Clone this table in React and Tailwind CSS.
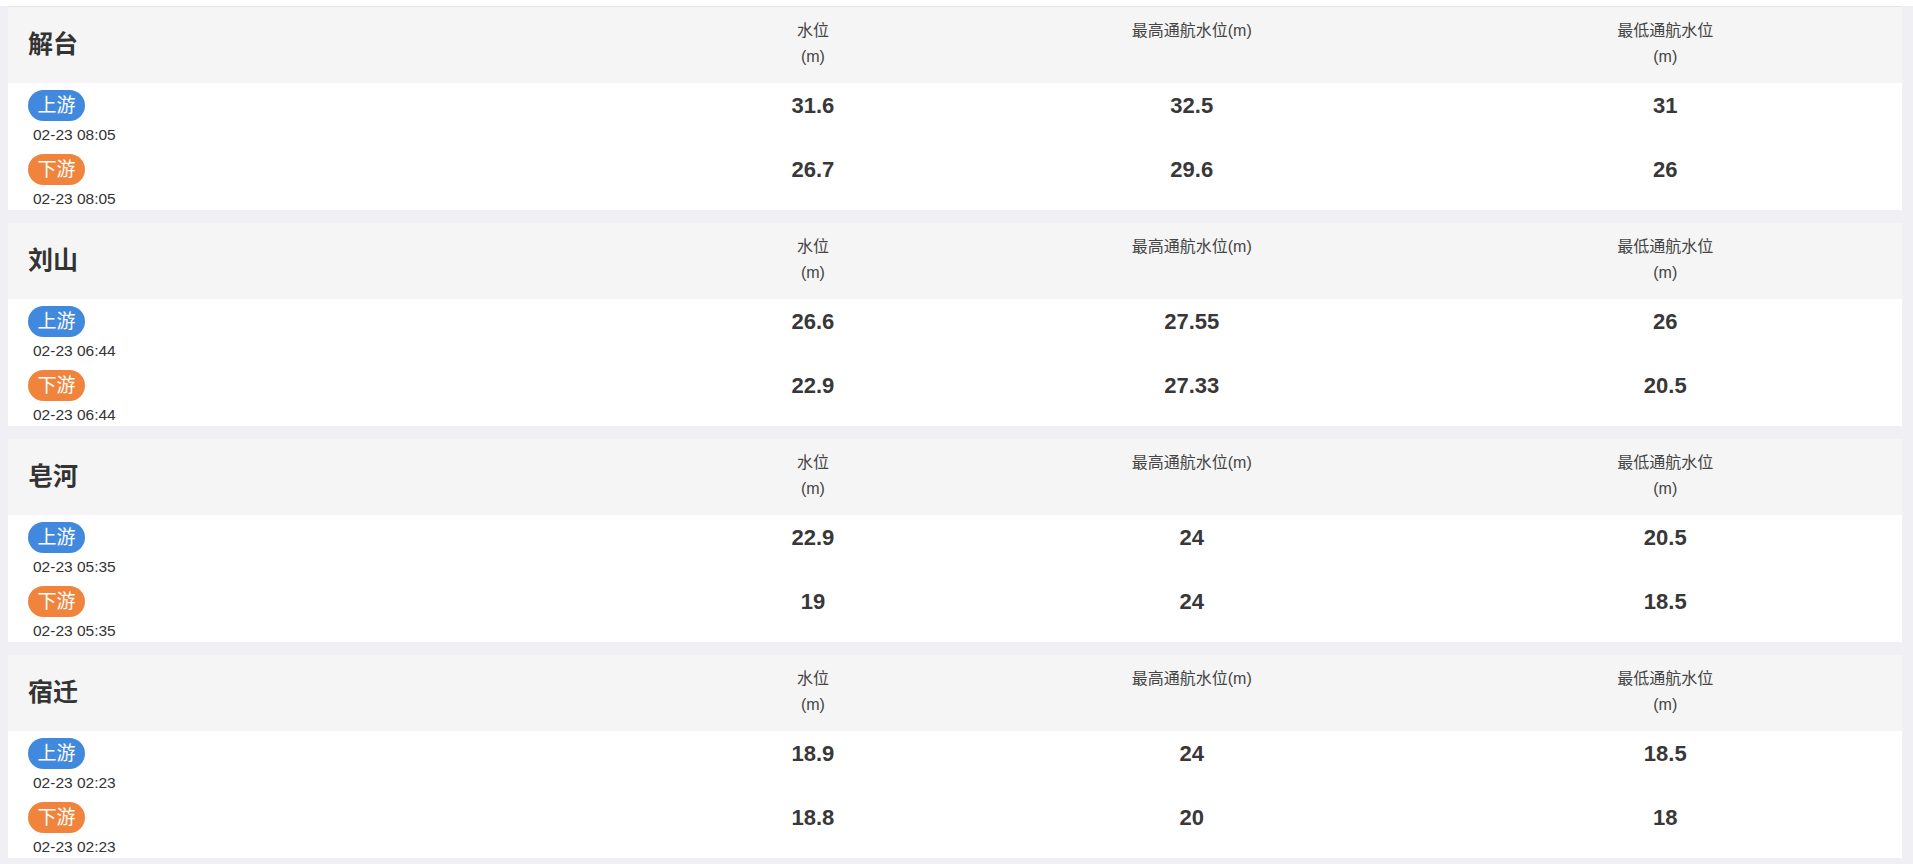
import React from "react";

const stations = [
  {
    name: "解台",
    rows: [
      { type: "up", time: "02-23 08:05", level: "31.6", max: "32.5", min: "31" },
      { type: "down", time: "02-23 08:05", level: "26.7", max: "29.6", min: "26" },
    ],
  },
  {
    name: "刘山",
    rows: [
      { type: "up", time: "02-23 06:44", level: "26.6", max: "27.55", min: "26" },
      { type: "down", time: "02-23 06:44", level: "22.9", max: "27.33", min: "20.5" },
    ],
  },
  {
    name: "皂河",
    rows: [
      { type: "up", time: "02-23 05:35", level: "22.9", max: "24", min: "20.5" },
      { type: "down", time: "02-23 05:35", level: "19", max: "24", min: "18.5" },
    ],
  },
  {
    name: "宿迁",
    rows: [
      { type: "up", time: "02-23 02:23", level: "18.9", max: "24", min: "18.5" },
      { type: "down", time: "02-23 02:23", level: "18.8", max: "20", min: "18" },
    ],
  },
];

const Badge = ({ type }) => (
  <div
    className={`flex h-[31px] w-[57px] items-center justify-center rounded-full text-[19px] leading-none text-white ${
      type === "up" ? "bg-[#4189dd]" : "bg-[#f0843c]"
    }`}
  >
    {type === "up" ? "上游" : "下游"}
  </div>
);

const Value = ({ children }) => (
  <div className="flex h-[31px] items-center justify-center text-[22px] font-bold text-[#383838]">
    {children}
  </div>
);

const StationCard = ({ station, first }) => (
  <div className={`bg-white ${first ? "mt-[6px] border-t border-[#e4e4e8]" : "mt-[13px]"}`}>
    {/* header */}
    <div className="grid h-[76px] grid-cols-[35%_15%_25%_25%] bg-[#f5f5f5] text-[#444]">
      <div className="flex items-center pl-[20px] text-[25px] font-bold text-[#333]">
        {station.name}
      </div>
      <div className="pt-[11px] text-center text-[16px] leading-[26px]">
        水位
        <br />
        (m)
      </div>
      <div className="pt-[11px] text-center text-[16px] leading-[26px]">最高通航水位(m)</div>
      <div className="pt-[11px] text-center text-[16px] leading-[26px]">
        最低通航水位
        <br />
        (m)
      </div>
    </div>
    {/* body */}
    <div className="h-[127px]">
      {station.rows.map((r, idx) => (
        <div key={idx} className="grid h-[63.5px] grid-cols-[35%_15%_25%_25%] pt-[7px]">
          <div className="pl-[20px]">
            <Badge type={r.type} />
            <div className="mt-[4px] pl-[5px] text-[15.5px] leading-[20px] text-[#333]">{r.time}</div>
          </div>
          <Value>{r.level}</Value>
          <Value>{r.max}</Value>
          <Value>{r.min}</Value>
        </div>
      ))}
    </div>
  </div>
);

export default function App() {
  return (
    <div
      className="min-h-[864px] bg-[#efeff4] pl-[8px] pr-[11px] pb-[4px]"
      style={{ fontFamily: '"Liberation Sans", "Noto Sans CJK SC", sans-serif' }}
    >
      {stations.map((s, i) => (
        <StationCard key={s.name} station={s} first={i === 0} />
      ))}
    </div>
  );
}
